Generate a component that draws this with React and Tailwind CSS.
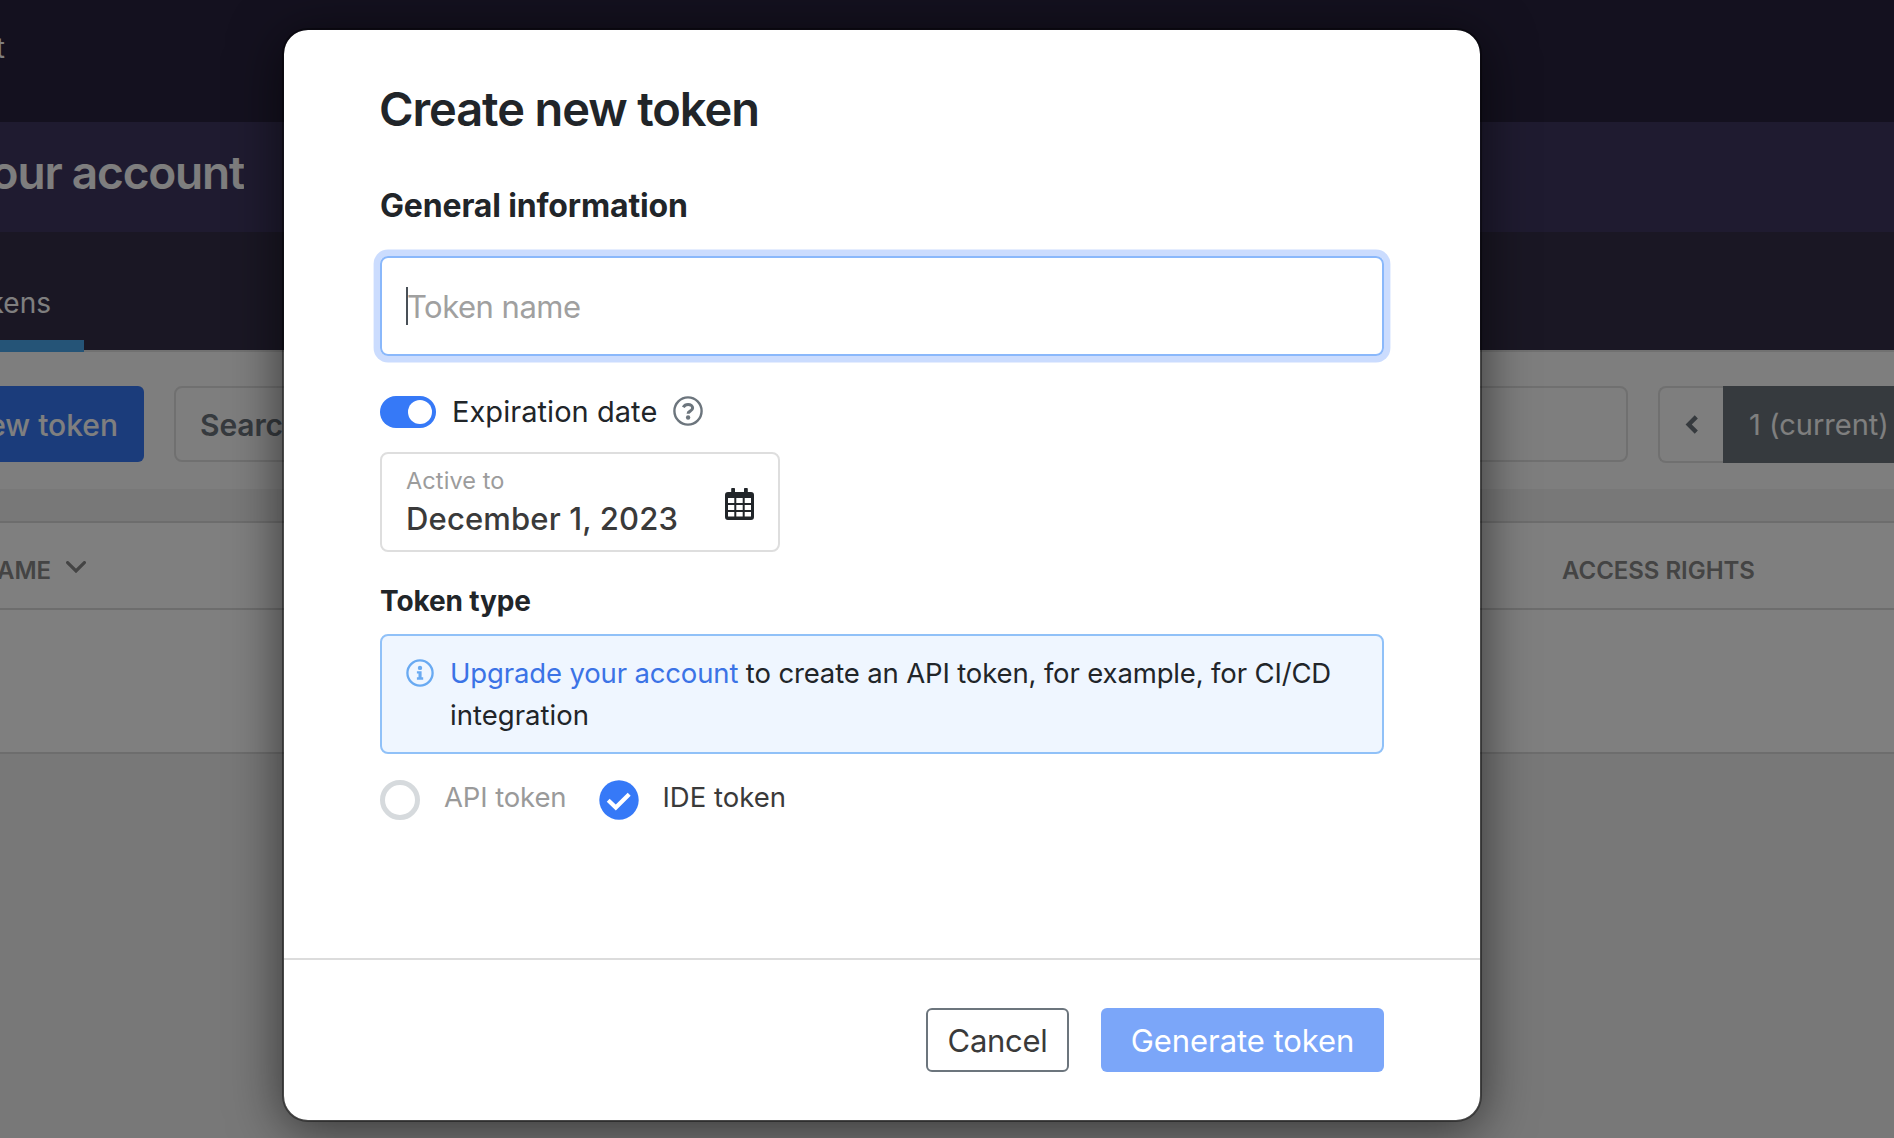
import React from "react";

function HelpIcon() {
  return (
    <svg className="size-[30px] shrink-0 text-[#6c757d]" viewBox="0 0 30 30" fill="none" stroke="currentColor">
      <circle cx="15" cy="15" r="13.6" strokeWidth="2.4" />
      <path d="M10.300 11.200C11.400 9.300 13 8.500 15.100 8.500c2.500 0 4.500 1.400 4.500 3.500 0 3.300-4.500 3-4.500 5.700" strokeWidth="3.1" />
      <circle cx="15.1" cy="21.500" r="2.200" fill="currentColor" stroke="none" />
    </svg>
  );
}

function InfoIcon() {
  return (
    <svg className="size-7 shrink-0 text-[#69aaf2]" viewBox="0 0 28 28" fill="none" stroke="currentColor">
      <circle cx="14" cy="14" r="12.6" strokeWidth="2.3" />
      <circle cx="14" cy="8.9" r="2.2" fill="currentColor" stroke="none" />
      <path d="M10.900 12.200h4.700v6.100h1.600v2.500h-6.300v-2.500h1.600v-3.700h-1.600z" fill="currentColor" stroke="none" />
    </svg>
  );
}

function CalendarIcon() {
  return (
    <svg className="h-8 w-[29px] shrink-0" viewBox="0 0 29 32">
      <path
        fill="#212529"
        fillRule="evenodd"
        d="M7 0h2.200a.8.8 0 0 1 .8.8V4h9V.8a.8.8 0 0 1 .8-.8H22a.8.8 0 0 1 .8.8V4H26a3 3 0 0 1 3 3v22a3 3 0 0 1-3 3H3a3 3 0 0 1-3-3V7a3 3 0 0 1 3-3h3.200V.8A.8.8 0 0 1 7 0zM3 10v5h6.300v-5zm8.300 0v5h6.400v-5zm8.400 0v5H26v-5zM3 17v5h6.300v-5zm8.300 0v5h6.400v-5zm8.400 0v5H26v-5zM3 24v4.600h6.300V24zm8.300 0v4.600h6.400V24zm8.400 0v4.600H26V24z"
      />
    </svg>
  );
}

function Page() {
  return (
    <div className="flex h-[1138px] w-full flex-col bg-[#f0f0f0]">
      <div className="h-[122px] shrink-0 bg-[#28223f]">
        <div className="flex w-[5px] justify-end overflow-hidden pt-7 text-[28px] leading-[40px] whitespace-nowrap text-white">
          Account
        </div>
      </div>
      <div className="h-[110px] shrink-0 bg-[#3e3660] pt-[17px]">
        <div className="flex w-[244px] justify-end overflow-hidden text-[46px] leading-[66px] font-semibold tracking-[-1.2px] whitespace-nowrap text-[#fcfcfc]">
          Your account
        </div>
      </div>
      <div className="flex h-[120px] shrink-0 flex-col justify-end bg-[linear-gradient(#342e48_118px,#e2e2e2_118px)]">
        <div className="flex w-[51px] justify-end overflow-hidden pb-4 text-[28px] leading-[42px] whitespace-nowrap text-white">
          Tokens
        </div>
        <div className="h-3 w-[84px] bg-[#4aa9ee]" />
      </div>
      <div className="flex h-[137px] shrink-0 items-start bg-[#fcfcfc] pt-[34px]">
        <div className="flex h-[76px] w-36 shrink-0 items-center justify-end overflow-hidden rounded-r-md bg-[#3679f6] pt-0.5 pr-[26px] text-[30px] font-medium whitespace-nowrap text-white">
          New token
        </div>
        <div className="ml-[30px] flex h-[76px] w-[1454px] shrink-0 items-center rounded-lg border-2 border-[#e0e0e0] pt-0.5 pl-6 text-[30px] font-semibold tracking-[-0.1px] text-[#6c757d]">
          Search
        </div>
        <div className="ml-[30px] flex h-[77px] flex-1 overflow-hidden">
          <div className="flex w-[65px] shrink-0 items-center justify-center rounded-l-lg border-2 border-r-0 border-[#e0e0e0]">
            <svg className="h-[19px] w-3.5" viewBox="0 0 14 19" fill="none" stroke="#6c757d" strokeWidth="4.400">
              <path d="M11.300 1.900 3.700 9.500l7.600 7.600" />
            </svg>
          </div>
          <div className="flex flex-1 items-center bg-[#6c757d] pl-[26px] text-[29px] whitespace-nowrap text-white">1 (current)</div>
        </div>
      </div>
      <div className="mt-8 flex h-[89px] shrink-0 items-center border-y-2 border-[#dadada] bg-white pt-[11px] text-2xl font-semibold tracking-[-0.03px] text-[#888]">
        <div className="flex w-[51px] shrink-0 justify-end overflow-hidden">NAME</div>
        <svg className="mb-2 ml-[15px] h-3 w-5 shrink-0" viewBox="0 0 20 12" fill="none" stroke="#888" strokeWidth="3.200" strokeLinecap="round">
          <path d="m1.600 1.600 8.400 8.400 8.400-8.400" />
        </svg>
        <div className="ml-[1476px] whitespace-nowrap">ACCESS RIGHTS</div>
      </div>
      <div className="h-36 shrink-0 border-b-2 border-[#dadada] bg-white" />
    </div>
  );
}

function TokenDialog() {
  return (
    <div
      role="dialog"
      className="box-content flex h-[1090px] w-[1196px] flex-col rounded-[26px] border-2 border-black/40 bg-white bg-clip-padding text-[#212529] shadow-[0_8px_52px_rgba(0,0,0,0.56)]"
    >
      <div className="flex h-[930px] flex-col border-b-2 border-[#dcdcdc] px-24 pt-[50px]">
        <h1 className="-ml-px text-[47px] leading-[58px] font-semibold tracking-[-1.100px]">Create new token</h1>
        <h2 className="mt-12 text-[32px] leading-10 font-bold tracking-[-0.16px]">General information</h2>
        <div className="mt-[30px] flex h-[100px] shrink-0 items-center rounded-lg border-2 border-[#8ab8fb] pl-6 text-[31px] tracking-[-0.500px] text-[#a0a0a0] shadow-[0_0_0_6.400px_#cbdcfe]">
          <div className="h-[38px] w-0.5 bg-[#495057]" />
          <span className="-ml-px pt-[3px]">Token name</span>
        </div>
        <div className="mt-10 flex h-8 items-center">
          <div className="flex h-8 w-14 items-center justify-end rounded-full bg-[#3679f7] pr-1">
            <div className="size-6 rounded-full bg-white" />
          </div>
          <span className="mb-px ml-4 text-[29px] leading-8 tracking-[0.050px]">Expiration date</span>
          <div className="mb-[3px] ml-4">
            <HelpIcon />
          </div>
        </div>
        <div className="mt-6 flex h-[100px] w-[400px] shrink-0 items-center justify-between rounded-lg border-2 border-[#dedede] pr-6 pl-6">
          <div className="flex flex-col gap-1 pt-0.5">
            <span className="text-[23.500px] leading-7 tracking-[0.100px] text-[#9c9c9c]">Active to</span>
            <span className="text-[31px] leading-10 font-medium tracking-[0.150px] text-[#3a3a3a]">December 1, 2023</span>
          </div>
          <div className="mt-1">
            <CalendarIcon />
          </div>
        </div>
        <h3 className="mt-8 text-[28px] leading-[34px] font-bold tracking-[-0.120px]">Token type</h3>
        <div className="mt-4 flex h-[120px] shrink-0 rounded-lg border-2 border-[#90c1f8] bg-[#eff6ff] pt-4 pr-6 pl-6">
          <div className="mt-[7px]">
            <InfoIcon />
          </div>
          <p className="ml-4 text-[27.500px] leading-[42px] tracking-[-0.145px]">
            <span className="text-[#3b73e6]">Upgrade your account</span> to create an API token, for example, for CI/CD{" "}
            <span className="tracking-[0.020px]">integration</span>
          </p>
        </div>
        <div className="mt-[26px] flex h-10 items-center text-[27.500px]">
          <div className="size-10 shrink-0 rounded-full border-[5px] border-[#d6dadd]" />
          <span className="mb-1 ml-6 tracking-[-0.130px] text-[#9a9a9a]">API token</span>
          <svg className="ml-[33px] size-10 shrink-0" viewBox="0 0 40 40" fill="none">
            <circle cx="20" cy="20" r="19.700" fill="#3679f7" />
            <path d="m9.200 20.300 7.600 7.300 13.400-13.400" stroke="#fff" strokeWidth="4.200" />
          </svg>
          <span className="mb-1 ml-[23px] text-[#3a3a3a]">IDE token</span>
        </div>
      </div>
      <div className="flex h-40 items-center justify-end gap-8 pr-24 text-[31px]">
        <button className="h-16 w-[143px] rounded-md border-2 border-[#6c757d] pt-0.5 tracking-[-0.300px] text-[#3a3a3a]">Cancel</button>
        <button className="h-16 w-[283px] rounded-md bg-[#7ba6f9] pt-0.5 tracking-[-0.060px] text-white">Generate token</button>
      </div>
    </div>
  );
}

export default function App() {
  return (
    <div className="relative h-[1138px] w-full overflow-hidden font-['Inter',sans-serif]">
      <Page />
      <div className="absolute inset-0 bg-black/50 pt-7 pl-[282px]">
        <TokenDialog />
      </div>
    </div>
  );
}
